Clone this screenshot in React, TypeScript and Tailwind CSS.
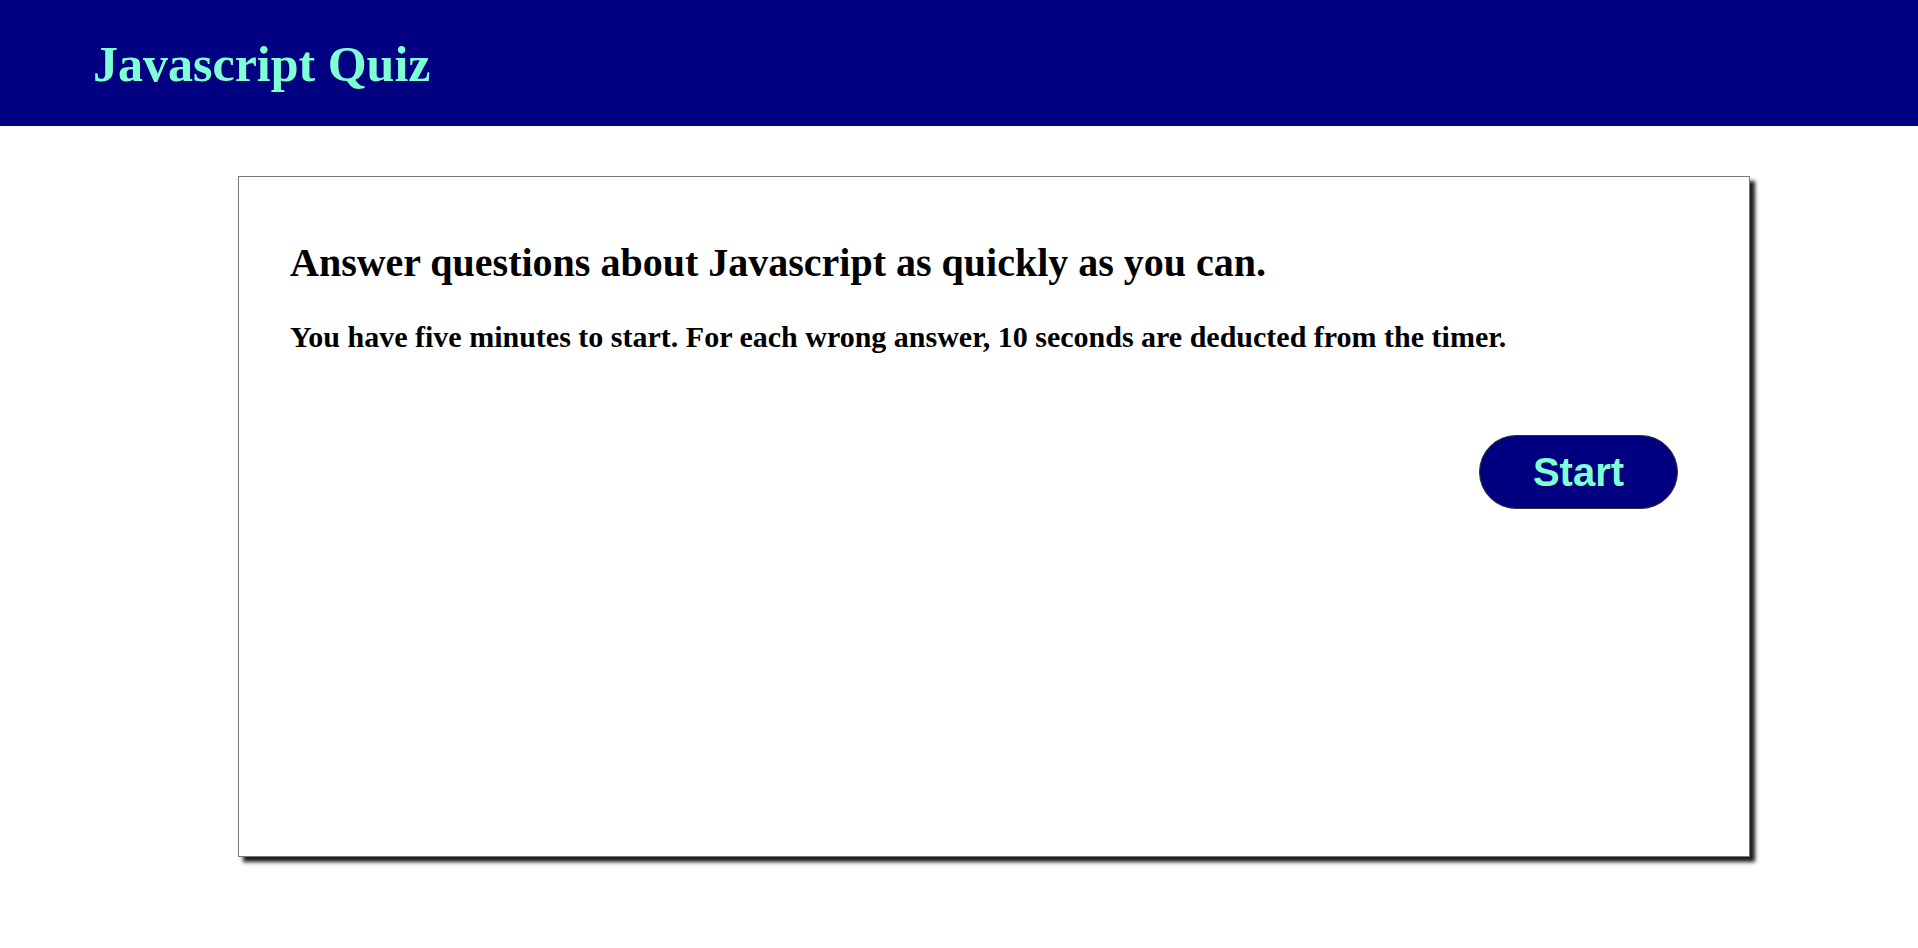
export default function App() {
  return (
    <div className="min-h-[948px] bg-white text-black" style={{ fontFamily: '"Liberation Serif", "Times New Roman", serif' }}>
      {/* header bar */}
      <header className="h-[126px] bg-[#000080] pl-[93px] pt-[37px]">
        <h1 className="text-[50px] font-bold leading-[54px] text-[#7fffd4]">Javascript Quiz</h1>
      </header>

      {/* quiz card */}
      <main className="pt-[50px]">
        <section className="ml-[238px] flex h-[681px] w-[1512px] flex-col border border-[#777] bg-white px-[51px] pt-[63px] shadow-[5px_5px_4px_rgba(0,0,0,0.9)]">
          <h2 className="text-[40px] font-bold leading-[46px]">Answer questions about Javascript as quickly as you can.</h2>
          <p className="mt-[34px] text-[30px] font-bold leading-[34px]">
            You have five minutes to start. For each wrong answer, 10 seconds are deducted from the timer.
          </p>
          <div className="mt-[81px] flex justify-end pr-[20px]">
            <button
              type="button"
              className="h-[74px] w-[199px] rounded-full border-[1.5px] border-[#333] bg-[#000080] text-[40px] font-bold text-[#7fffd4]"
              style={{ fontFamily: '"Liberation Sans", Arial, sans-serif' }}
            >
              Start
            </button>
          </div>
        </section>
      </main>
    </div>
  );
}
